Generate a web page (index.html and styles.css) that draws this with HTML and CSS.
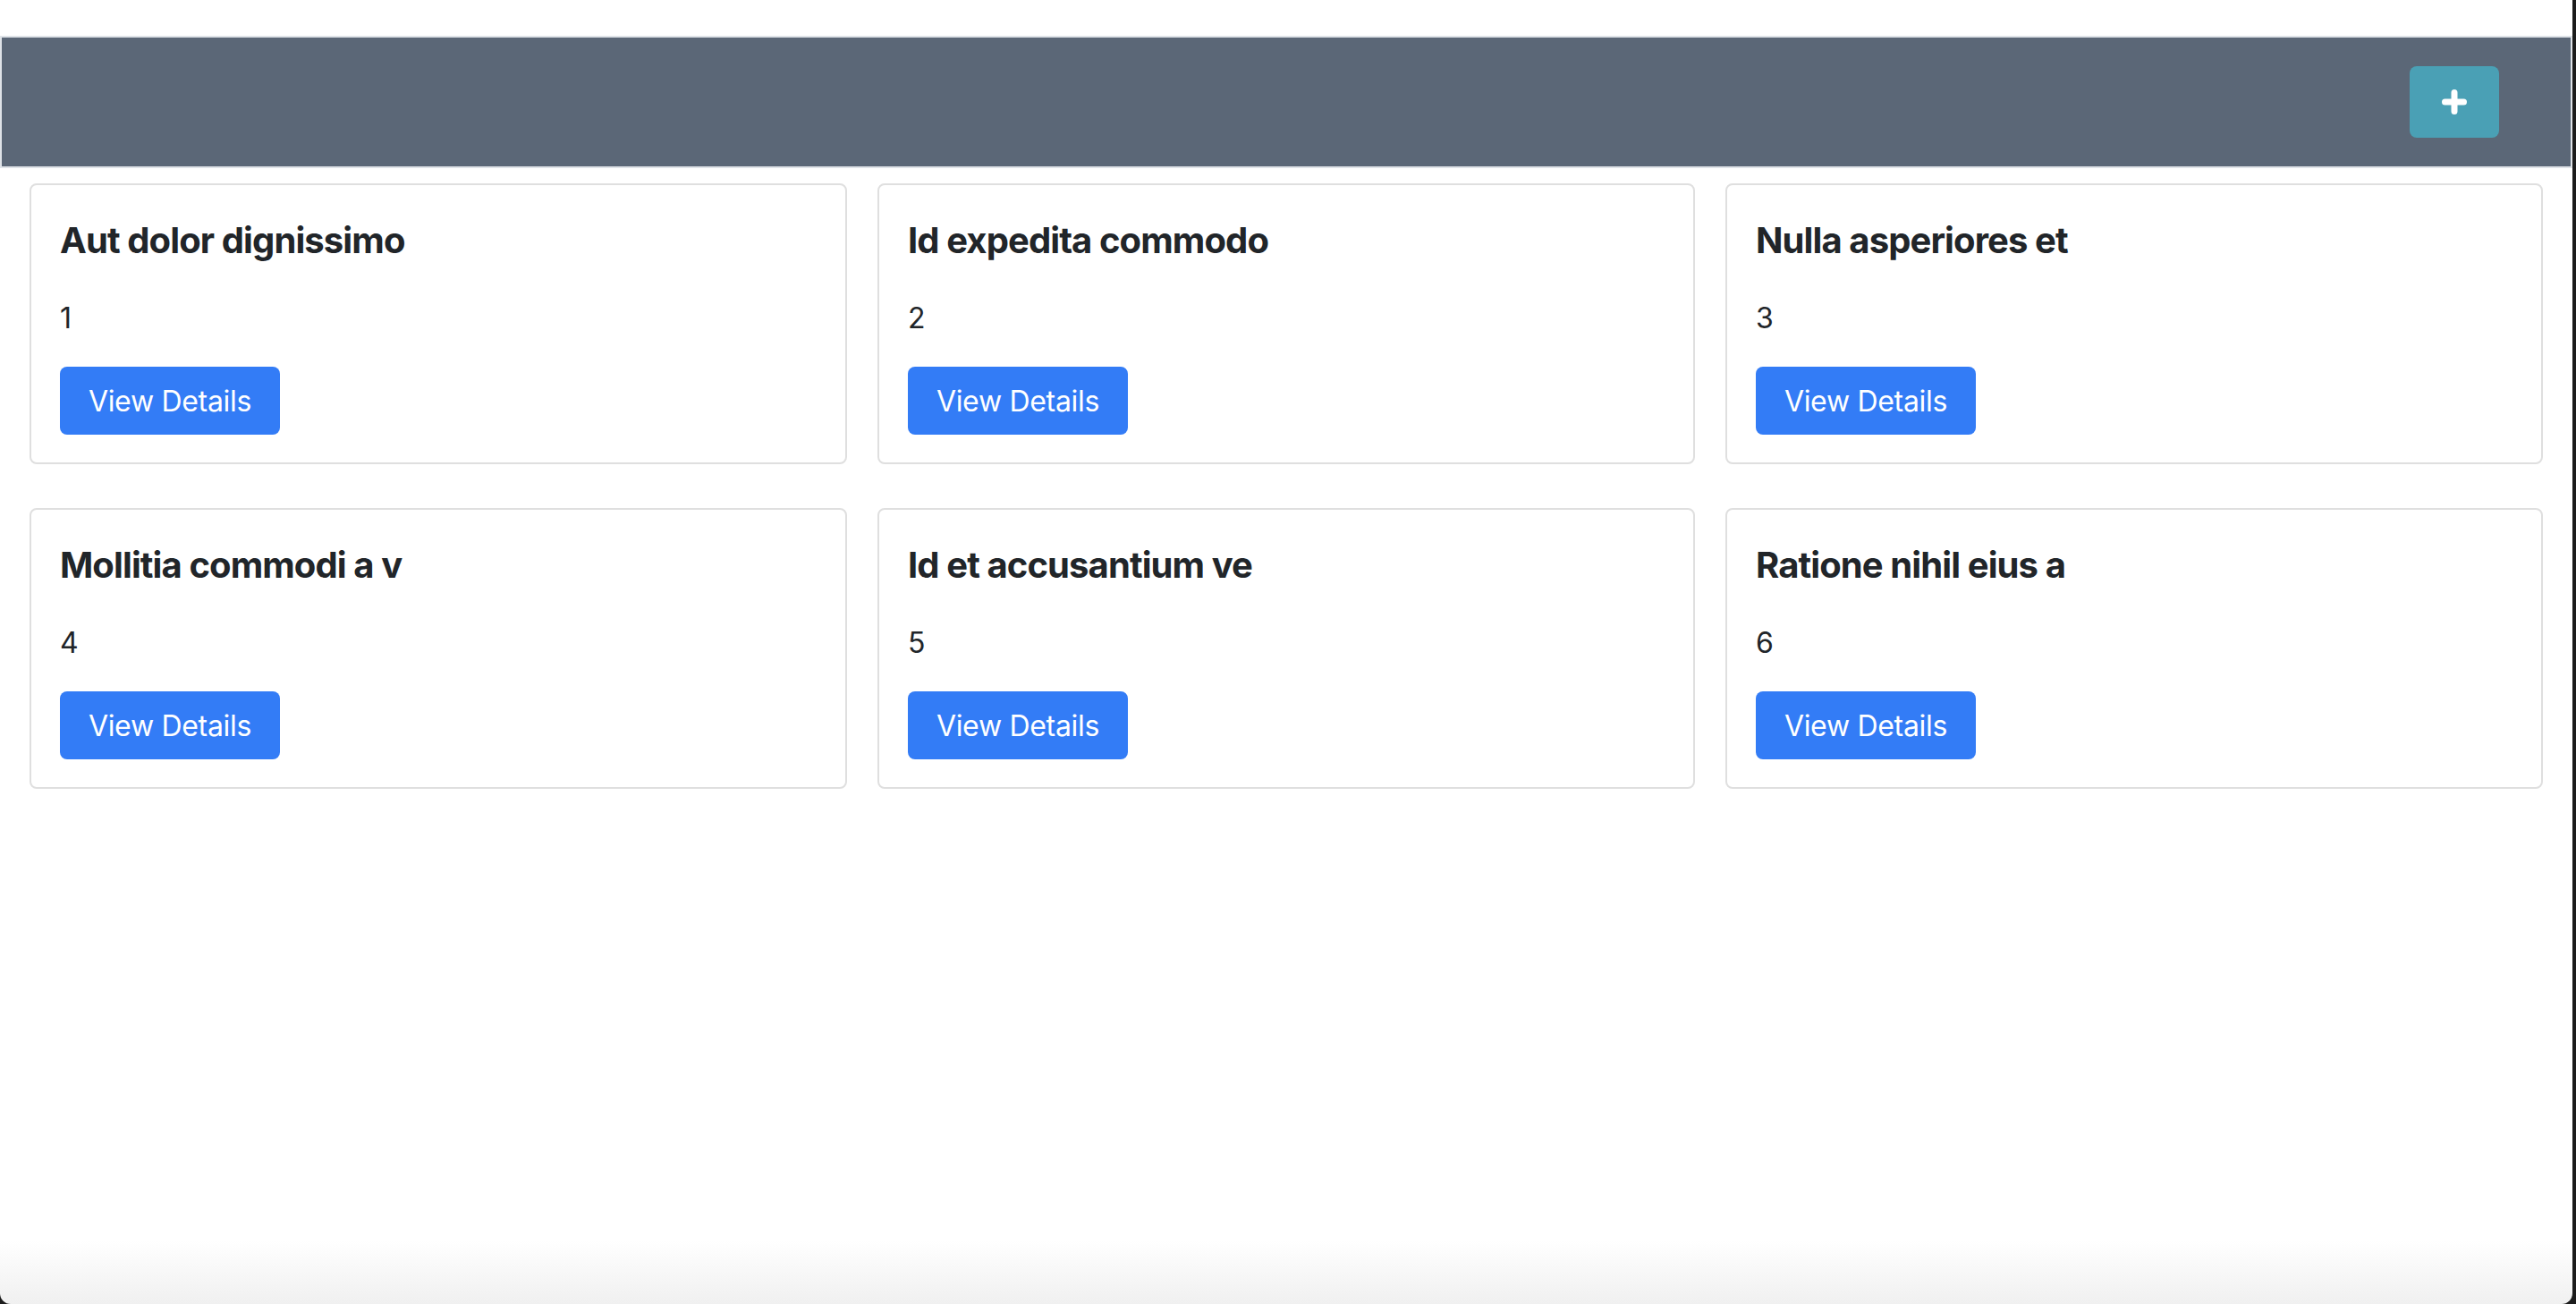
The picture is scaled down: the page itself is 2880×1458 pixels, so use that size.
FILE: index.html
```html
<!DOCTYPE html>
<html lang="en">
<head>
<meta charset="utf-8">
<title>Items</title>
<link rel="stylesheet" href="styles.css">
</head>
<body>
<div class="window">
  <nav class="navbar">
    <button class="add-btn" type="button" aria-label="Add">
      <svg class="plus" width="28" height="28" viewBox="0 0 28 28" aria-hidden="true">
        <path d="M3.5 14H24.5M14 3.5V24.5" stroke="#fff" stroke-width="7" stroke-linecap="round" fill="none"/>
      </svg>
    </button>
  </nav>
  <main class="grid">
    <section class="card">
      <h5 class="card-title">Aut dolor dignissimo</h5>
      <p class="card-text">1</p>
      <a class="btn" href="#">View Details</a>
    </section>
    <section class="card">
      <h5 class="card-title">Id expedita commodo</h5>
      <p class="card-text">2</p>
      <a class="btn" href="#">View Details</a>
    </section>
    <section class="card">
      <h5 class="card-title">Nulla asperiores et</h5>
      <p class="card-text">3</p>
      <a class="btn" href="#">View Details</a>
    </section>
    <section class="card">
      <h5 class="card-title">Mollitia commodi a v</h5>
      <p class="card-text">4</p>
      <a class="btn" href="#">View Details</a>
    </section>
    <section class="card">
      <h5 class="card-title">Id et accusantium ve</h5>
      <p class="card-text">5</p>
      <a class="btn" href="#">View Details</a>
    </section>
    <section class="card">
      <h5 class="card-title">Ratione nihil eius a</h5>
      <p class="card-text">6</p>
      <a class="btn" href="#">View Details</a>
    </section>
  </main>
</div>
</body>
</html>
```

FILE: styles.css
```css
html, body {
  margin: 0;
  padding: 0;
}

body {
  background: #1c1c1c;
  font-family: Inter, "Noto Sans", "Liberation Sans", sans-serif;
  color: #212529;
}

.window {
  width: 2876px;
  height: 1458px;
  box-sizing: border-box;
  padding-top: 40px;
  background: linear-gradient(to bottom, #ffffff 0, #ffffff 1387px, #f0f0f0 1458px);
  border-radius: 0 0 12px 12px;
  overflow: hidden;
}

.navbar {
  height: 148px;
  box-sizing: border-box;
  border: 2px solid #dfe3e8;
  background: #5b6777;
  display: flex;
  justify-content: flex-end;
  align-items: center;
  padding-right: 80px;
}

.add-btn {
  width: 100px;
  height: 80px;
  border: 0;
  border-radius: 8px;
  background: #4aa0b5;
  display: flex;
  align-items: center;
  justify-content: center;
  padding: 0;
  cursor: pointer;
}

.plus {
  display: block;
}

.grid {
  display: grid;
  grid-template-columns: repeat(3, 914px);
  column-gap: 34px;
  row-gap: 49px;
  padding: 17px 33px 0;
}

.card {
  border: 2px solid #dfdfdf;
  border-radius: 8px;
  padding: 38px 32px 31px;
  display: flex;
  flex-direction: column;
  align-items: flex-start;
}

.card-title {
  margin: 0 0 39px;
  font-size: 40px;
  line-height: 48px;
  font-weight: 650;
  letter-spacing: -0.9px;
  color: #212529;
}

.card-text {
  margin: 0 0 30px;
  font-size: 32px;
  line-height: 48px;
  color: #212529;
}

.btn {
  display: inline-flex;
  align-items: center;
  justify-content: center;
  height: 76px;
  width: 246px;
  box-sizing: border-box;
  border-radius: 8px;
  background: #337cf6;
  color: #ffffff;
  font-size: 32px;
  letter-spacing: -0.3px;
  text-decoration: none;
}
```
